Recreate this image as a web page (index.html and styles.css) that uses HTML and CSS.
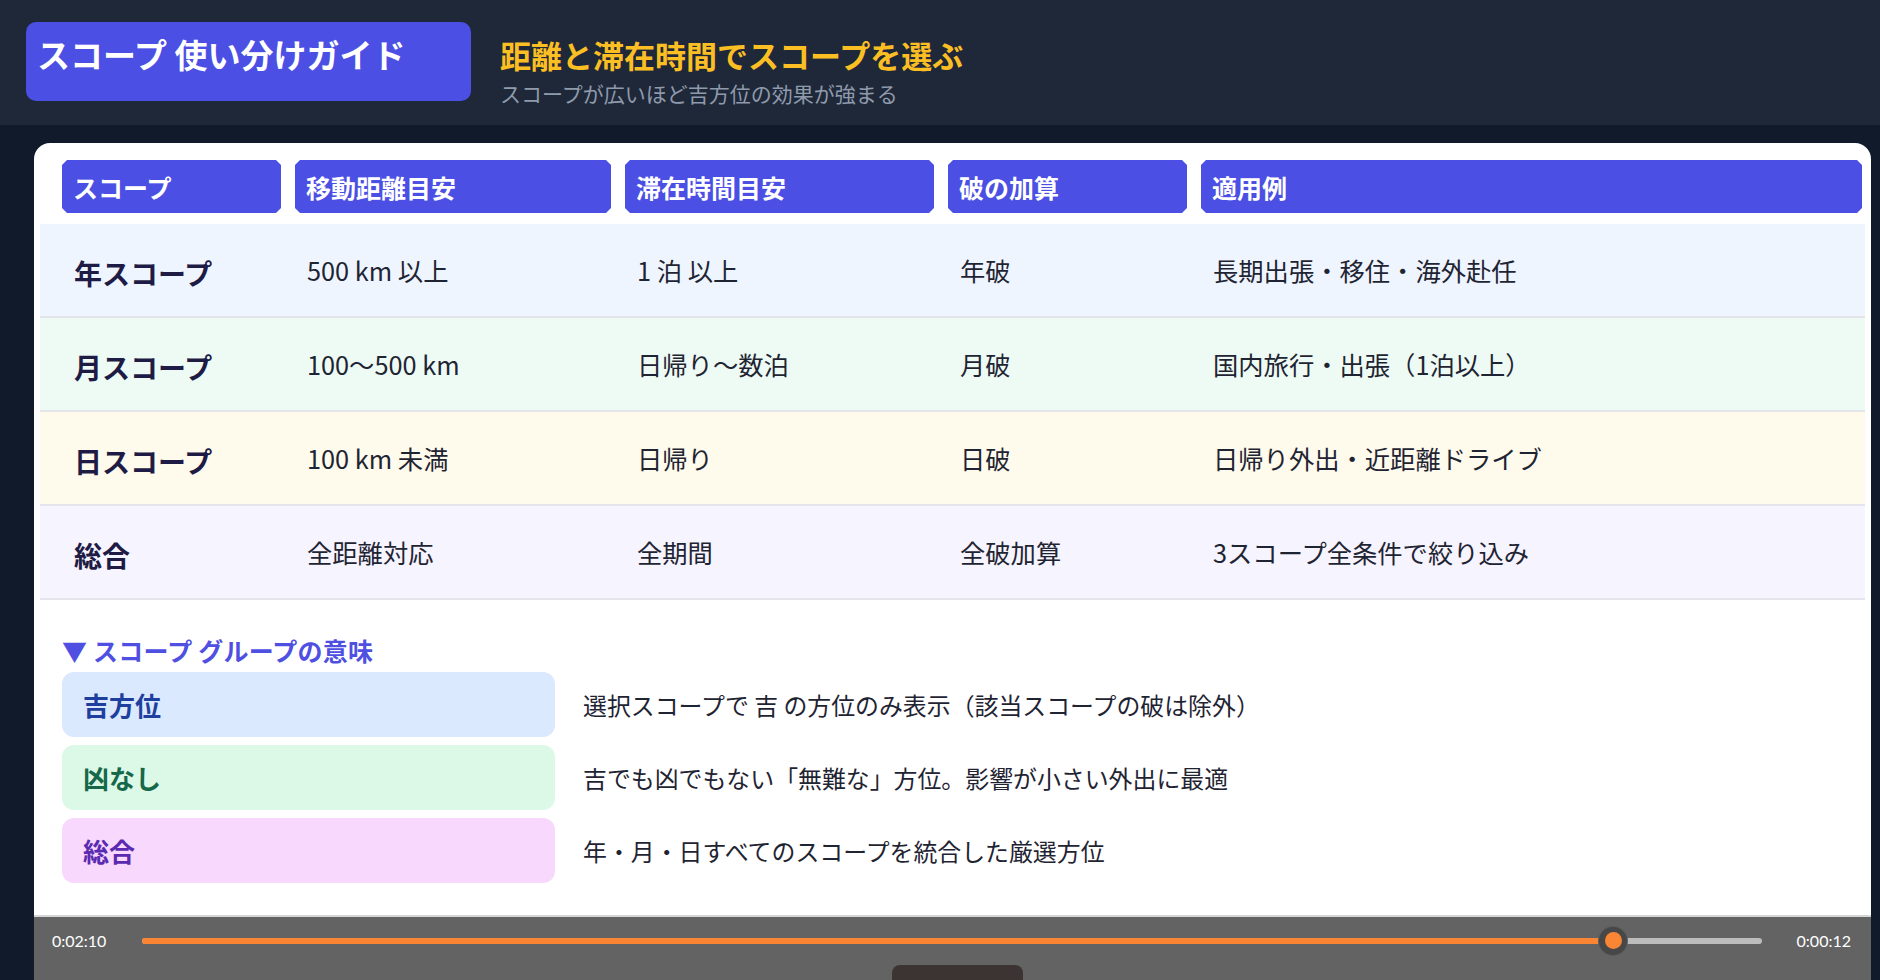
FILE: index.html
```html
<!DOCTYPE html>
<html lang="ja">
<head>
<meta charset="utf-8">
<title>スコープ 使い分けガイド</title>
<link rel="stylesheet" href="styles.css">
</head>
<body>
<header class="topbar">
  <div class="title-box">スコープ 使い分けガイド</div>
  <div class="title-text">
    <div class="title-main">距離と滞在時間でスコープを選ぶ</div>
    <div class="title-sub">スコープが広いほど吉方位の効果が強まる</div>
  </div>
</header>

<main class="card">
  <div class="grid head-row">
    <div class="th">スコープ</div>
    <div class="th">移動距離目安</div>
    <div class="th">滞在時間目安</div>
    <div class="th">破の加算</div>
    <div class="th">適用例</div>
  </div>

  <div class="rows">
    <div class="grid row row-year">
      <div class="td scope">年スコープ</div>
      <div class="td">500 km 以上</div>
      <div class="td">1 泊 以上</div>
      <div class="td">年破</div>
      <div class="td">長期出張・移住・海外赴任</div>
    </div>
    <div class="grid row row-month">
      <div class="td scope">月スコープ</div>
      <div class="td">100～500 km</div>
      <div class="td">日帰り～数泊</div>
      <div class="td">月破</div>
      <div class="td">国内旅行・出張（1泊以上）</div>
    </div>
    <div class="grid row row-day">
      <div class="td scope">日スコープ</div>
      <div class="td">100 km 未満</div>
      <div class="td">日帰り</div>
      <div class="td">日破</div>
      <div class="td">日帰り外出・近距離ドライブ</div>
    </div>
    <div class="grid row row-all">
      <div class="td scope">総合</div>
      <div class="td">全距離対応</div>
      <div class="td">全期間</div>
      <div class="td">全破加算</div>
      <div class="td">3スコープ全条件で絞り込み</div>
    </div>
  </div>

  <section class="groups">
    <h2 class="groups-title">▼ スコープ グループの意味</h2>
    <div class="group-list">
      <div class="pill pill-blue">吉方位</div>
      <div class="desc">選択スコープで 吉 の方位のみ表示（該当スコープの破は除外）</div>
      <div class="pill pill-green">凶なし</div>
      <div class="desc">吉でも凶でもない「無難な」方位。影響が小さい外出に最適</div>
      <div class="pill pill-pink">総合</div>
      <div class="desc">年・月・日すべてのスコープを統合した厳選方位</div>
    </div>
  </section>

  <div class="player">
    <span class="time">0:02:10</span>
    <div class="track">
      <div class="fill" style="width: 90.85%"></div>
      <div class="thumb" style="left: 90.85%"><span class="thumb-dot"></span></div>
    </div>
    <span class="time">0:00:12</span>
    <div class="handle"></div>
  </div>
</main>
</body>
</html>
```

FILE: styles.css
```css
* { box-sizing: border-box; }

html, body {
  margin: 0;
  padding: 0;
  height: 100%;
}

body {
  background: #111a2b;
  font-family: "Noto Sans CJK JP", "Noto Sans", sans-serif;
  overflow: hidden;
  width: 1880px;
  height: 980px;
}

.topbar {
  height: 125px;
  background: #1e2839;
  display: flex;
  align-items: flex-start;
  padding: 22px 0 0 26px;
}

.title-box {
  width: 445px;
  height: 79px;
  background: #4b4fe4;
  border-radius: 10px;
  color: #ffffff;
  font-weight: 700;
  font-size: 33px;
  line-height: 40px;
  padding: 12px 11px 0 11px;
  white-space: nowrap;
}

.title-text {
  margin-left: 29px;
  margin-top: 14px;
}

.title-main {
  color: #fbbf24;
  font-weight: 700;
  font-size: 31px;
  line-height: 38px;
  white-space: nowrap;
}

.title-sub {
  color: #8f9aab;
  font-size: 21px;
  line-height: 26px;
  margin-top: 6px;
  white-space: nowrap;
}

.card {
  position: relative;
  margin: 18px 9px 0 34px;
  height: 837px;
  background: #ffffff;
  border-radius: 16px 16px 0 0;
  padding: 17px 6px 0 6px;
}

.grid {
  display: grid;
  grid-template-columns: 219px 316px 309px 239px 1fr;
  column-gap: 14px;
  padding: 0 3px 0 22px;
}

.head-row {
  height: 53px;
}

.th {
  background: #4b4fe4;
  color: #ffffff;
  font-weight: 700;
  font-size: 25px;
  display: flex;
  align-items: center;
  padding-left: 11px;
  clip-path: polygon(5px 0, calc(100% - 5px) 0, 100% 5px, 100% calc(100% - 5px), calc(100% - 5px) 100%, 5px 100%, 0 calc(100% - 5px), 0 5px);
  white-space: nowrap;
}

.rows {
  margin-top: 11px;
}

.row {
  height: 94px;
  border-bottom: 2px solid #e3e5ea;
  align-items: center;
}

.row-year { background: #eef5ff; }
.row-month { background: #edfbf4; }
.row-day { background: #fefaec; }
.row-all { background: #f6f4fe; }

.td {
  padding-left: 12px;
  font-size: 25.3px;
  color: #1f2433;
  white-space: nowrap;
}

.td.scope {
  font-size: 28px;
  font-weight: 700;
  color: #1e1b45;
  padding-top: 5px;
}

.groups {
  padding: 0 0 0 22px;
}

.groups-title {
  margin: 35px 0 0 0;
  font-size: 25px;
  line-height: 30px;
  font-weight: 700;
  color: #4f4fe2;
  letter-spacing: 0.2px;
}

.group-list {
  margin-top: 7px;
  display: grid;
  grid-template-columns: 493px 1fr;
  column-gap: 28px;
  row-gap: 8px;
}

.pill {
  height: 65px;
  border-radius: 12px;
  display: flex;
  align-items: center;
  padding-left: 21px;
  font-size: 26px;
  font-weight: 700;
}

.pill-blue { background: #dbe9fe; color: #1f3f9e; }
.pill-green { background: #dcf8e7; color: #17684a; }
.pill-pink { background: #f8d8fc; color: #5a2bb0; }

.desc {
  display: flex;
  align-items: center;
  font-size: 23.9px;
  color: #1f2433;
  white-space: nowrap;
}

.player {
  position: absolute;
  left: 0;
  right: 0;
  top: 772px;
  height: 65px;
  background: #636363;
  border-top: 2px solid #d6d6d6;
  display: flex;
  align-items: center;
  padding: 0 20px 16px 18px;
}

.time {
  font-family: "Lato", "Liberation Sans", sans-serif;
  font-size: 16px;
  color: #ffffff;
  white-space: nowrap;
}

.track {
  position: relative;
  flex: 1;
  height: 6px;
  margin: 0 35px 0 36px;
  background: #bdbdbd;
  border-radius: 3px;
}

.fill {
  height: 100%;
  background: #fa8534;
  border-radius: 3px;
}

.thumb {
  position: absolute;
  top: 50%;
  width: 28px;
  height: 28px;
  margin: -14px 0 0 -14px;
  border-radius: 50%;
  background: #474747;
  box-shadow: 0 0 0 1px #5c5c5c;
  display: flex;
  align-items: center;
  justify-content: center;
}

.thumb-dot {
  width: 17px;
  height: 17px;
  border-radius: 50%;
  background: #fa8534;
}

.handle {
  position: absolute;
  left: 858px;
  bottom: 0;
  width: 131px;
  height: 15px;
  background: #3c3333;
  border-radius: 8px 8px 0 0;
}
```
